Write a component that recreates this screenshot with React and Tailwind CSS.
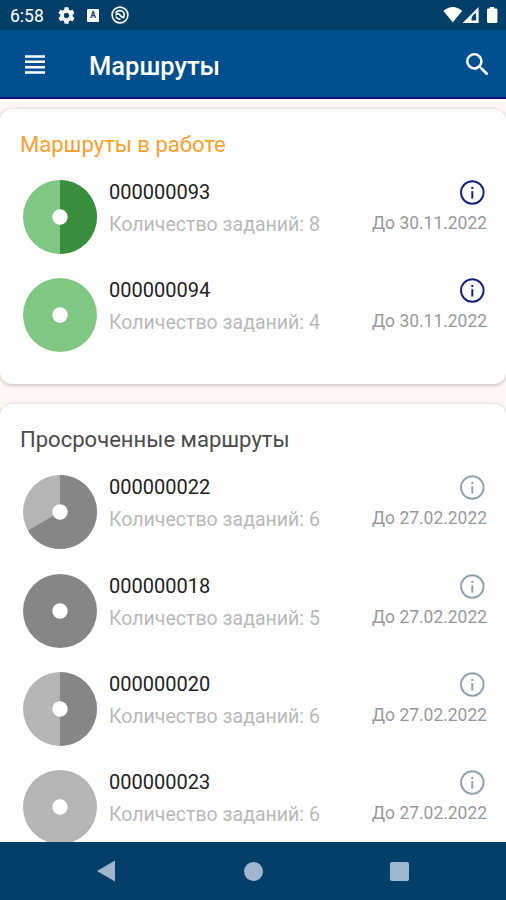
const ACTIVE = [
  { id: '000000093', count: 8, date: '30.11.2022', share: 0.5 },
  { id: '000000094', count: 4, date: '30.11.2022', share: 0 },
];

const OVERDUE = [
  { id: '000000022', count: 6, date: '27.02.2022', share: 2 / 3 },
  { id: '000000018', count: 5, date: '27.02.2022', share: 1 },
  { id: '000000020', count: 6, date: '27.02.2022', share: 0.5 },
  { id: '000000023', count: 6, date: '27.02.2022', share: 0 },
];

function Pie({ share, base, done }) {
  const angle = share * 2 * Math.PI;
  const x = 37 + 37 * Math.sin(angle);
  const y = 37 - 37 * Math.cos(angle);
  return (
    <svg viewBox="0 0 74 74" className="h-[74px] w-[74px] shrink-0">
      <circle cx="37" cy="37" r="37" fill={share === 1 ? done : base} />
      {share > 0 && share < 1 && (
        <path d={`M37 37V0A37 37 0 ${share > 0.5 ? 1 : 0} 1 ${x} ${y}Z`} fill={done} />
      )}
      <circle cx="37" cy="37" r="7.7" fill="#fff" />
    </svg>
  );
}

function InfoIcon({ color }) {
  return (
    <svg viewBox="0 0 26 26" className="h-[26px] w-[26px]" fill="none" stroke={color}>
      <circle cx="13.3" cy="12.5" r="11.3" strokeWidth="1.9" />
      <path d="M13.3 11.2V18.5" strokeWidth="2" />
      <path d="M13.3 6.8V9" strokeWidth="2" />
    </svg>
  );
}

function Row({ route, base, done, info }) {
  return (
    <div className="flex h-[98.45px] items-start pr-[19px] pl-[23px]">
      <Pie share={route.share} base={base} done={done} />
      <div className="ml-3 flex grow flex-col whitespace-nowrap">
        <span className="text-[20px] leading-6 text-[#222]">{route.id}</span>
        <span className="mt-[9px] text-[19.55px] leading-6 text-[#b9b9b9]">Количество заданий: {route.count}</span>
      </div>
      <div className="flex flex-col items-end whitespace-nowrap">
        <div className="mr-[2px] h-[26px]"><InfoIcon color={info} /></div>
        <span className="mt-[5px] text-[17.45px] leading-6 text-[#999]">До {route.date}</span>
      </div>
    </div>
  );
}

function Card({ title, titleClass, routes, ...colors }) {
  return (
    <section className="shrink-0 rounded-[12px] bg-white pb-[7.3px] shadow-[0_1px_4px_rgba(0,0,0,0.28)]">
      <h2 className={`h-[71px] pt-[22px] pl-5 text-[22.05px] leading-7 ${titleClass}`}>{title}</h2>
      {routes.map((route) => (
        <Row key={route.id} route={route} {...colors} />
      ))}
    </section>
  );
}

function StatusBar() {
  return (
    <div className="flex h-[30px] shrink-0 items-center bg-[#043f69] pl-[10px] text-white">
      <span className="w-[47.5px] pt-[2px] text-[17.5px] leading-[30px]">6:58</span>
      <svg viewBox="2 2 20 20" className="h-[17px] w-[17px]" fill="currentColor">
        <path d="M19.14 12.94c.04-.3.06-.61.06-.94 0-.32-.02-.64-.07-.94l2.03-1.58a.49.49 0 0 0 .12-.61l-1.92-3.32a.488.488 0 0 0-.59-.22l-2.39.96c-.5-.38-1.03-.7-1.62-.94l-.36-2.54a.484.484 0 0 0-.48-.41h-3.84c-.24 0-.43.17-.47.41l-.36 2.54c-.59.24-1.13.57-1.62.94l-2.39-.96c-.22-.08-.47 0-.59.22L2.74 8.87c-.12.21-.08.47.12.61l2.03 1.58c-.05.3-.09.63-.09.94s.02.64.07.94l-2.03 1.58a.49.49 0 0 0-.12.61l1.92 3.32c.12.22.37.29.59.22l2.39-.96c.5.38 1.03.7 1.62.94l.36 2.54c.05.24.24.41.48.41h3.84c.24 0 .44-.17.47-.41l.36-2.54c.59-.24 1.13-.56 1.62-.94l2.39.96c.22.08.47 0 .59-.22l1.92-3.32c.12-.22.07-.47-.12-.61zM12 15.2A3.2 3.2 0 0 1 8.8 12c0-1.77 1.43-3.2 3.2-3.2s3.2 1.43 3.2 3.2-1.43 3.2-3.2 3.2" />
      </svg>
      <div className="ml-[12.5px] flex h-[13px] w-[12px] items-center justify-center rounded-[1px] bg-white text-[8.5px] leading-[13px] font-bold text-[#043f69]">A</div>
      <svg viewBox="0 0 18 18" className="ml-[12px] h-[18px] w-[18px]" fill="none" stroke="currentColor">
        <circle cx="9" cy="9" r="7.9" strokeWidth="1.6" />
        <path d="M4.7 7.2C5.6 5.5 7.2 4.7 9 4.7c2.5 0 4.3 1.9 4.3 4.3 0 1.3-.5 2.4-1.3 3.1M4.5 9.2C6 7.2 8.2 7.6 9.2 9.2c.8 1.3 1.7 2.3 3.4 2.2M4.9 10.7c.8 1.7 2.4 2.7 4.6 2.5" strokeWidth="1.7" />
      </svg>
      <svg viewBox="0 0 64 20" className="ml-auto h-5 w-[64px]" fill="currentColor">
        <path d="M1.4 6.1Q10.8-2.3 20.2 6.1L10.8 17.3Z" />
        <path fillRule="evenodd" d="M20.6 18L36.6 2V18ZM29.4 15.5H34V8.2Q29.4 9.5 29.4 15.5Z" />
        <path d="M47.8 2H52.2V3.6H54.2a1.2 1.2 0 0 1 1.2 1.2V16.8A1.2 1.2 0 0 1 54.2 18H46.2a1.2 1.2 0 0 1-1.2-1.2V4.8a1.2 1.2 0 0 1 1.2-1.2H47.8Z" />
      </svg>
    </div>
  );
}

export default function App() {
  return (
    <div className="flex h-[900px] w-[506px] flex-col overflow-hidden bg-[#fdf8f6] font-[Roboto,sans-serif]">
      <StatusBar />
      <header className="flex h-[69px] shrink-0 items-center border-b-2 border-[#060a7a] bg-[#004f8e] pr-[18px] pl-[25px] text-white">
        <svg viewBox="0 0 20 20" className="mt-[2px] h-5 w-5" fill="currentColor">
          <path d="M0 .3H20V2.8H0ZM0 5.6H20V8.1H0ZM0 10.9H20V13.4H0ZM0 16.2H20V18.7H0Z" />
        </svg>
        <h1 className="ml-11 pt-[4px] text-[25.5px] leading-8 font-medium">Маршруты</h1>
        <svg viewBox="3 3 17.5 17.5" className="mt-px ml-auto h-[22.5px] w-[22.5px]" fill="currentColor">
          <path d="M15.5 14h-.79l-.28-.27A6.47 6.47 0 0 0 16 9.5 6.5 6.5 0 1 0 9.5 16c1.61 0 3.09-.59 4.23-1.57l.27.28v.79l5 4.99L20.49 19zm-6 0C7.01 14 5 11.99 5 9.5S7.01 5 9.5 5 14 7.01 14 9.5 11.99 14 9.5 14" />
        </svg>
      </header>
      <main className="flex min-h-0 grow flex-col gap-5 overflow-hidden pt-[10px]">
        <Card title="Маршруты в работе" titleClass="text-[#f9a02c]" routes={ACTIVE} base="#81c784" done="#388e3c" info="#13207f" />
        <Card title="Просроченные маршруты" titleClass="text-[#4b4b4b]" routes={OVERDUE} base="#b5b5b5" done="#868686" info="#8fa3ad" />
      </main>
      <nav className="flex h-[58px] shrink-0 items-center bg-[#043f69] pl-[97px] text-[#9fb6cf]">
        <svg viewBox="0 0 18 22" className="h-[22px] w-[18px]" fill="currentColor"><path d="M0 11L18 .5V21.5Z" /></svg>
        <div className="ml-[129px] h-[19px] w-[19px] rounded-full bg-[#9fb6cf]" />
        <div className="ml-[126.5px] h-[19px] w-[19.5px] rounded-[2px] bg-[#9fb6cf]" />
      </nav>
    </div>
  );
}
